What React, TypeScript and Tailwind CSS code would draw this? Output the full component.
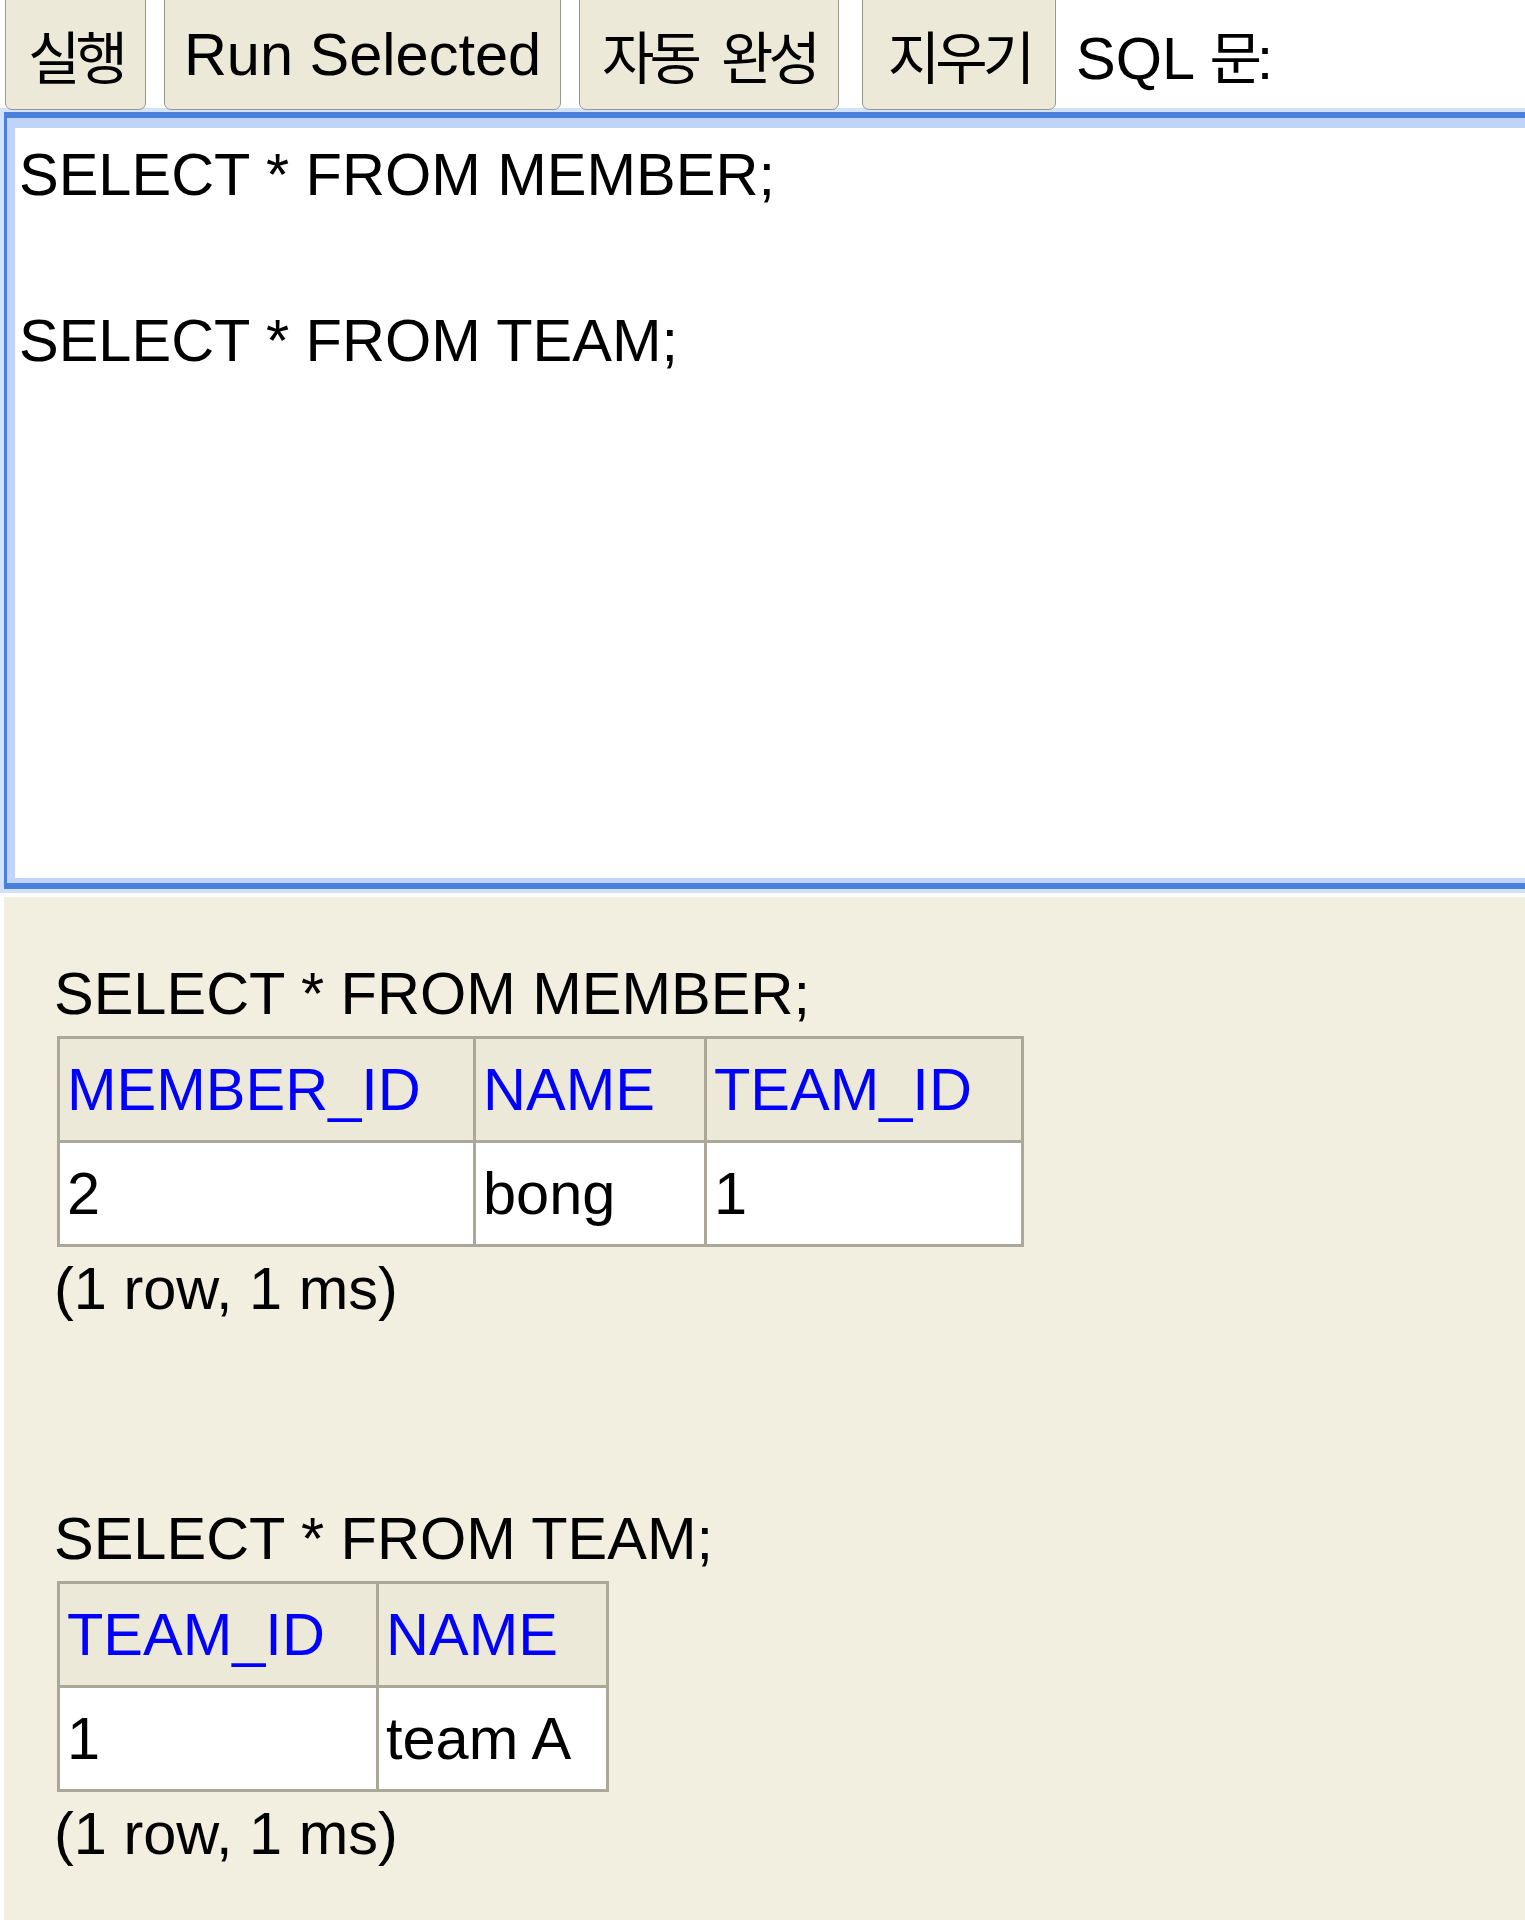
import React from "react";

const KR = "font-['Noto_Sans_CJK_KR','Liberation_Sans',sans-serif]";

function Btn({ w, ml, children }: { w: string; ml: string; children: React.ReactNode }) {
  return (
    <div
      className={`${w} ${ml} h-[118px] shrink-0 border border-[#9a9888] rounded-[7px] bg-[#ece9d8] flex justify-center pt-[27px] leading-[69px] text-[59.5px] text-black whitespace-nowrap`}
    >
      {children}
    </div>
  );
}

function Kr({ children }: { children: React.ReactNode }) {
  return <span className={`${KR} text-[57px] tracking-[-5px] leading-[69px]`}>{children}</span>;
}

function Cell({
  w,
  head,
  last,
  children,
}: {
  w: string;
  head?: boolean;
  last?: boolean;
  children: React.ReactNode;
}) {
  return (
    <div
      className={`${w} shrink-0 pl-[7px] pt-[11px] pb-[10px] leading-[80px] whitespace-nowrap ${
        last ? "" : "border-r-[3px] border-[#aca899]"
      } ${head ? "bg-[#ece9d8] text-[#0000ff]" : "bg-white text-black"}`}
    >
      {children}
    </div>
  );
}

export default function App() {
  return (
    <div className="w-[1525px] h-[1920px] overflow-hidden bg-white font-['Liberation_Sans','Noto_Sans_CJK_KR',sans-serif] text-black">
      {/* top toolbar */}
      <div className="relative z-10 h-[110px] flex items-end">
        <Btn w="w-[141px]" ml="ml-[5px]">
          <Kr>실행</Kr>
        </Btn>
        <Btn w="w-[397px]" ml="ml-[18px]">
          Run Selected
        </Btn>
        <Btn w="w-[260px]" ml="ml-[18px]">
          <Kr>자동</Kr>
          <span className="inline-block w-[24px]" />
          <Kr>완성</Kr>
        </Btn>
        <Btn w="w-[194px]" ml="ml-[23px]">
          <Kr>지우기</Kr>
        </Btn>
        <div className="ml-[20px] self-start pt-[20px] leading-[69px] text-[59.5px] whitespace-nowrap">
          SQL <Kr>문</Kr>:
        </div>
      </div>

      {/* SQL textarea with focus ring */}
      <textarea
        readOnly
        spellCheck={false}
        defaultValue={"SELECT * FROM MEMBER;\n\nSELECT * FROM TEAM;"}
        className="block ml-[4px] mt-[2px] w-[1600px] h-[777px] resize-none outline-none overflow-hidden bg-white border-t-[6px] border-b-[6px] border-l-[3px] border-r-[3px] border-[#4a7fdc] shadow-[inset_0_10px_0_0_#bfd4f8,inset_8px_0_0_0_#bfd4f8,inset_0_-5px_0_0_#bfd4f8,0_0_0_4px_#d3e2fb] pl-[12px] pt-[15px] font-['Liberation_Sans',sans-serif] text-[59.5px] leading-[83px] text-black"
      />

      {/* result frame */}
      <div className="ml-[4px] mt-[8px] h-[1100px] bg-[#f3efe0] pl-[50px] pt-[55px] text-[59.5px] leading-[84px]">
        <div className="whitespace-nowrap">SELECT * FROM MEMBER;</div>
        <div className="ml-[3px] inline-flex flex-col border-[3px] border-[#aca899] align-top">
          <div className="flex border-b-[3px] border-[#aca899]">
            <Cell w="w-[416px]" head>
              MEMBER_ID
            </Cell>
            <Cell w="w-[231px]" head>
              NAME
            </Cell>
            <Cell w="w-[314px]" head last>
              TEAM_ID
            </Cell>
          </div>
          <div className="flex">
            <Cell w="w-[416px]">2</Cell>
            <Cell w="w-[231px]">bong</Cell>
            <Cell w="w-[314px]" last>
              1
            </Cell>
          </div>
        </div>
        <div className="whitespace-nowrap">(1 row, 1 ms)</div>
        <div className="h-[166px]" />
        <div className="whitespace-nowrap">SELECT * FROM TEAM;</div>
        <div className="ml-[3px] inline-flex flex-col border-[3px] border-[#aca899] align-top">
          <div className="flex border-b-[3px] border-[#aca899]">
            <Cell w="w-[319px]" head>
              TEAM_ID
            </Cell>
            <Cell w="w-[227px]" head last>
              NAME
            </Cell>
          </div>
          <div className="flex">
            <Cell w="w-[319px]">1</Cell>
            <Cell w="w-[227px]" last>
              team A
            </Cell>
          </div>
        </div>
        <div className="whitespace-nowrap">(1 row, 1 ms)</div>
      </div>
    </div>
  );
}
